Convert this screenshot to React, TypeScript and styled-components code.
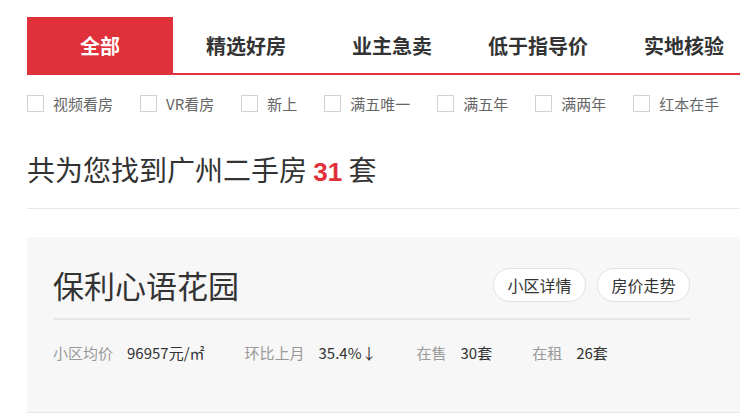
import React from 'react';
import styled, { createGlobalStyle } from 'styled-components';

const RED = '#e0313a';

const GlobalStyle = createGlobalStyle`
  html, body {
    margin: 0;
    padding: 0;
    background: #fff;
    overflow: hidden;
  }
  body {
    font-family: "Noto Sans CJK SC", "Noto Sans", sans-serif;
    color: #333;
  }
`;

const Page = styled.div`
  width: 1200px;
  padding: 17px 0 0 27px;
`;

const Tabs = styled.div`
  display: flex;
  border-bottom: 2px solid ${RED};
`;

const Tab = styled.div<{ $active?: boolean }>`
  width: 146px;
  height: 56px;
  display: flex;
  align-items: center;
  justify-content: center;
  font-size: 20px;
  font-weight: bold;
  color: ${p => (p.$active ? '#fff' : '#333')};
  background: ${p => (p.$active ? RED : 'transparent')};
`;

const Filters = styled.div`
  display: flex;
  margin-top: 20px;
  height: 17px;
`;

const Filter = styled.label`
  display: flex;
  align-items: center;
  margin-right: 27px;
  font-size: 15px;
  color: #666;
  white-space: nowrap;
`;

const Box = styled.span`
  width: 15px;
  height: 15px;
  border: 1px solid #d2d2d2;
  background: #fff;
  margin-right: 9px;
`;

const Headline = styled.h2`
  margin: 39px 0 0;
  font-size: 28px;
  font-weight: normal;
  line-height: 36px;
  color: #333;
`;

const Count = styled.span`
  color: ${RED};
  font-weight: bold;
  font-size: 26px;
  font-family: "Liberation Sans", Arial, sans-serif;
`;

const Divider = styled.div`
  margin-top: 18px;
  border-top: 1px solid #e8e8e8;
`;

const Card = styled.div`
  margin-top: 28px;
  background: #f7f7f7;
  border-bottom: 1px solid #e6e6e6;
  padding: 31px 0 48px 26px;
`;

const CardInner = styled.div`
  width: 637px;
`;

const CardHeader = styled.div`
  display: flex;
  align-items: center;
  justify-content: space-between;
  padding-bottom: 16px;
  border-bottom: 2px solid #e6e6e6;
`;

const Title = styled.h3`
  margin: 0;
  font-size: 31px;
  font-weight: normal;
  line-height: 34px;
  color: #333;
`;

const Actions = styled.div`
  display: flex;
  gap: 11px;
`;

const Pill = styled.button`
  width: 93px;
  height: 34px;
  padding: 0;
  border: 1px solid #e2e2e2;
  border-radius: 17px;
  background: #fff;
  font-family: inherit;
  font-size: 16px;
  color: #333;
  cursor: pointer;
`;

const Stats = styled.div`
  display: flex;
  gap: 40px;
  margin-top: 22px;
  font-size: 15px;
  line-height: 22px;
`;

const Stat = styled.div`
  display: flex;
  gap: 14px;
`;

const StatLabel = styled.span`
  color: #999;
`;

const StatValue = styled.span`
  color: #333;
`;

const tabs = ['全部', '精选好房', '业主急卖', '低于指导价', '实地核验'];
const filters = ['视频看房', 'VR看房', '新上', '满五唯一', '满五年', '满两年', '红本在手'];
const stats = [
  ['小区均价', '96957元/㎡'],
  ['环比上月', '35.4%↓'],
  ['在售', '30套'],
  ['在租', '26套']
];

export default () => (
  <Page>
    <GlobalStyle />
    <Tabs>
      {tabs.map((t, i) => (
        <Tab key={t} $active={i === 0}>
          {t}
        </Tab>
      ))}
    </Tabs>
    <Filters>
      {filters.map(f => (
        <Filter key={f}>
          <Box />
          {f}
        </Filter>
      ))}
    </Filters>
    <Headline>
      共为您找到广州二手房 <Count>31</Count> 套
    </Headline>
    <Divider />
    <Card>
      <CardInner>
        <CardHeader>
          <Title>保利心语花园</Title>
          <Actions>
            <Pill>小区详情</Pill>
            <Pill>房价走势</Pill>
          </Actions>
        </CardHeader>
        <Stats>
          {stats.map(([label, value]) => (
            <Stat key={label}>
              <StatLabel>{label}</StatLabel>
              <StatValue>{value}</StatValue>
            </Stat>
          ))}
        </Stats>
      </CardInner>
    </Card>
  </Page>
);
